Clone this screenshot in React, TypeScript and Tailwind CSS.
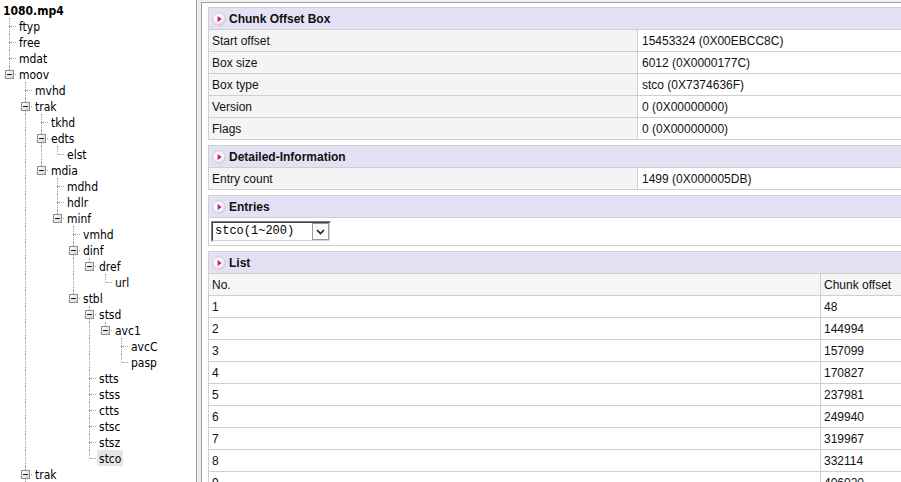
import React from 'react';

type TNode = { name: string; children?: TNode[]; selected?: boolean; box?: boolean; more?: boolean };

const TREE: TNode = {
  name: '1080.mp4',
  children: [
    { name: 'ftyp' },
    { name: 'free' },
    { name: 'mdat' },
    {
      name: 'moov',
      children: [
        { name: 'mvhd' },
        {
          name: 'trak',
          children: [
            { name: 'tkhd' },
            { name: 'edts', children: [{ name: 'elst' }] },
            {
              name: 'mdia',
              children: [
                { name: 'mdhd' },
                { name: 'hdlr' },
                {
                  name: 'minf',
                  children: [
                    { name: 'vmhd' },
                    { name: 'dinf', children: [{ name: 'dref', children: [{ name: 'url' }] }] },
                    {
                      name: 'stbl',
                      children: [
                        { name: 'stsd', children: [{ name: 'avc1', children: [{ name: 'avcC' }, { name: 'pasp' }] }] },
                        { name: 'stts' },
                        { name: 'stss' },
                        { name: 'ctts' },
                        { name: 'stsc' },
                        { name: 'stsz' },
                        { name: 'stco', selected: true },
                      ],
                    },
                  ],
                },
              ],
            },
          ],
        },
        { name: 'trak', box: true, more: true },
      ],
    },
  ],
};

type Flat = { node: TNode; depth: number; guides: boolean[]; hasNext: boolean };

function flatten(node: TNode, depth: number, guides: boolean[], hasNext: boolean, out: Flat[]) {
  out.push({ node, depth, guides, hasNext: hasNext || !!node.more });
  const ch = node.children || [];
  ch.forEach((c, i) => {
    const childGuides = depth === 0 ? [] : [...guides, hasNext];
    flatten(c, depth + 1, childGuides, i < ch.length - 1, out);
  });
}

const dot = 'absolute border-dotted border-[#a0a0a0]';

function TreeRow({ f }: { f: Flat }) {
  const hasChildren = !!(f.node.children && f.node.children.length) || !!f.node.box;
  return (
    <div className="flex h-4 pl-px">
      {f.guides.map((g, k) => (
        <div key={k} className="relative w-4 h-4 shrink-0">
          {g && <div className={`${dot} left-2 top-0 h-4 border-l`} />}
        </div>
      ))}
      {f.depth > 0 && (
        <div className="relative w-4 h-4 shrink-0">
          <div className={`${dot} left-2 top-0 h-2 border-l`} />
          {f.hasNext && <div className={`${dot} left-2 top-2 h-2 border-l`} />}
          <div className={`${dot} left-[9px] top-2 w-[6px] border-t`} />
          {hasChildren && (
            <div className="absolute left-1 top-1 w-[9px] h-[9px] border border-[#8f8f8f] bg-gradient-to-br from-white to-[#d6d6d6]">
              <div className="absolute left-[1px] top-[3px] w-[5px] h-px bg-[#1a1a1a]" />
            </div>
          )}
        </div>
      )}
      <span
        className={`px-[2px] h-4 leading-[18px] overflow-hidden whitespace-nowrap text-black ${
          f.depth === 0 ? "font-bold font-['DejaVu_Sans_Condensed','DejaVu_Sans',sans-serif]" : ''
        } ${f.node.selected ? 'bg-[#e5e5e5]' : ''}`}
      >
        {f.node.name}
      </span>
    </div>
  );
}

function HeaderIcon() {
  return (
    <svg width="14" height="14" viewBox="0 0 14 14" className="shrink-0">
      <defs>
        <radialGradient id="hg" cx="0.4" cy="0.35" r="0.7">
          <stop offset="0" stopColor="#ffffff" />
          <stop offset="0.7" stopColor="#f1eef6" />
          <stop offset="1" stopColor="#cfc9da" />
        </radialGradient>
      </defs>
      <circle cx="7" cy="7" r="6.3" fill="url(#hg)" stroke="#c9c3d3" strokeWidth="0.8" />
      <polygon points="5.6,4 9.6,7 5.6,10" fill="#c4167f" />
    </svg>
  );
}

function SectionHeader({ title }: { title: string }) {
  return (
    <div className="h-[21px] bg-[#e4e1f4] flex items-center pl-[3px] gap-[3px]">
      <HeaderIcon />
      <span className="font-bold text-[12px] text-[#111]">{title}</span>
    </div>
  );
}

function KVRow({ label, value }: { label: string; value: string }) {
  return (
    <div className="flex h-[22px] border-t border-[#cfcfcf]">
      <div className="w-[428px] shrink-0 bg-[#f4f4f4] flex items-center pl-[3px]">{label}</div>
      <div className="flex-1 bg-white border-l border-[#cfcfcf] flex items-center pl-[4px]">{value}</div>
    </div>
  );
}

const LIST = ['48', '144994', '157099', '170827', '237981', '249940', '319967', '332114', '406020'];

export default function App() {
  const flat: Flat[] = [];
  flatten(TREE, 0, [], false, flat);

  return (
    <div className="w-[901px] h-[482px] overflow-hidden flex bg-[#f0f0f0]">
      <div className="w-[197px] shrink-0 h-full bg-white border-r border-[#a0a0a0] pt-[2px] overflow-hidden text-[12px] font-['DejaVu_Sans_Condensed','DejaVu_Sans',sans-serif]">
        {flat.map((f, i) => (
          <TreeRow key={i} f={f} />
        ))}
      </div>
      <div className="w-[4px] shrink-0 bg-[#ececec]" />
      <div className="flex-1 min-w-0 mt-[2px] border-l border-t border-[#a0a0a0] bg-white overflow-hidden pt-[4px] pl-[6px] text-[12px] text-[#111] font-['Liberation_Sans',Arial,sans-serif]">
        <div className="w-[900px]">
          <div className="border border-[#cfcfcf] mb-[5px]">
            <SectionHeader title="Chunk Offset Box" />
            <KVRow label="Start offset" value="15453324 (0X00EBCC8C)" />
            <KVRow label="Box size" value="6012 (0X0000177C)" />
            <KVRow label="Box type" value="stco (0X7374636F)" />
            <KVRow label="Version" value="0 (0X00000000)" />
            <KVRow label="Flags" value="0 (0X00000000)" />
          </div>
          <div className="border border-[#cfcfcf] mb-[5px]">
            <SectionHeader title="Detailed-Information" />
            <KVRow label="Entry count" value="1499 (0X000005DB)" />
          </div>
          <div className="border border-[#cfcfcf] mb-[5px]">
            <SectionHeader title="Entries" />
            <div className="h-[28px] border-t border-[#cfcfcf] bg-white pt-[3px] pl-[2px]">
              <div className="w-[120px] h-[21px] border border-t-[#808080] border-l-[#808080] border-b-white border-r-white">
                <div className="h-full flex border border-t-[#404040] border-l-[#404040] border-b-[#d4d4d4] border-r-[#d4d4d4] bg-white">
                  <span className="flex-1 pl-[2px] leading-[17px] font-['Liberation_Mono',monospace] text-[12px] text-black">
                    stco(1~200)
                  </span>
                  <div className="w-[17px] h-[17px] border border-[#9a9a9a] bg-[#fbfbfb] flex items-center justify-center">
                    <svg width="9" height="6" viewBox="0 0 9 6">
                      <polyline points="1,1 4.5,4.5 8,1" fill="none" stroke="#222" strokeWidth="1.6" />
                    </svg>
                  </div>
                </div>
              </div>
            </div>
          </div>
          <div className="border border-[#cfcfcf]">
            <SectionHeader title="List" />
            <div className="flex h-[22px] border-t border-[#cfcfcf] bg-[#f5f5f5]">
              <div className="w-[611px] shrink-0 flex items-center pl-[3px]">No.</div>
              <div className="flex-1 border-l border-[#cfcfcf] flex items-center pl-[3px]">Chunk offset</div>
            </div>
            {LIST.map((v, i) => (
              <div key={i} className="flex h-[22px] border-t border-[#cfcfcf] bg-white">
                <div className="w-[611px] shrink-0 flex items-center pl-[3px]">{i + 1}</div>
                <div className="flex-1 border-l border-[#cfcfcf] flex items-center pl-[3px]">{v}</div>
              </div>
            ))}
          </div>
        </div>
      </div>
    </div>
  );
}
